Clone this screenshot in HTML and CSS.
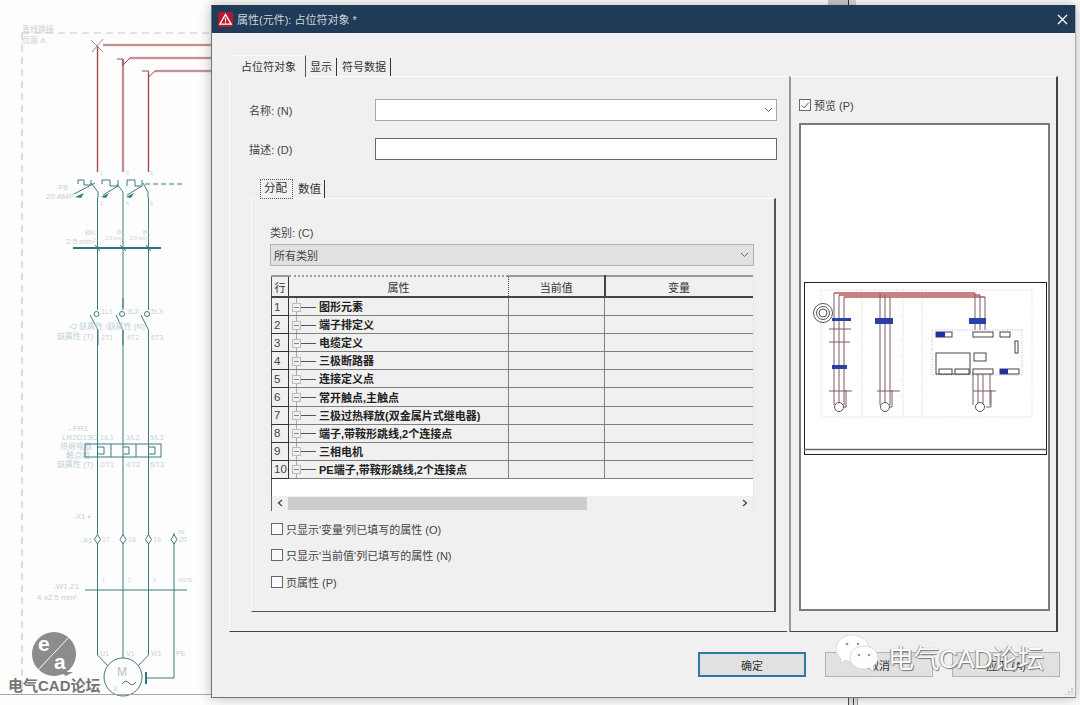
FILE: index.html
```html
<!DOCTYPE html>
<html lang="zh-CN">
<head>
<meta charset="utf-8">
<title>属性(元件): 占位符对象</title>
<link rel="stylesheet" href="styles.css">
</head>
<body>
<div class="desktop">
  <svg class="schematic" width="212" height="705" viewBox="0 0 212 705">
    <path class="dash" d="M22 33H212M22 33V695"/>
    <text class="faint" x="22" y="32">直线跳接</text>
    <text class="faint" x="22" y="43">页面 A</text>
    <path class="halo" d="M97.5 46V172M103 45H212M123 60V172M129 58H212M148.5 73V172M154 71H212"/>
    <path class="red" d="M97.5 46V172M103 45H212M117 59H123V66M123 65L130 58H212M123 60V172M142 71H148.5V78M148.5 77L155 71H212M148.5 73V172"/>
    <path class="red-light" d="M91 40L103 52M103 39L92 52"/>
    <path class="teal" d="M74 194L95 183M78 184V180H84V185H91V180M91 183L98 192V198M103 195L118 186M102 184V180H110V186H118V180M117 184L123 192V198M127 195L142 186M127 186V180H135V186H142V180M143 183L148 192V198"/>
    <path class="teal" d="M97.5 198V655M123 198V665M148.5 198V655"/>
    <path class="dash-teal" d="M145 184H184"/>
    <path class="teal-fill" d="M75 197L84 193L81 198ZM101 197L109 193L106 198ZM126 197L134 193L131 198Z"/>
    <path class="bus" d="M73 248H161"/>
    <path class="teal" d="M95 245L100 251M120 245L126 251M146 245L151 251"/>
    <text class="faint teal-text" x="56" y="190">-F6</text>
    <text class="faint teal-text" x="46" y="199">20 AMP</text>
    <text class="tiny" x="100" y="175">1</text><text class="tiny" x="126" y="175">3</text><text class="tiny" x="150" y="175">5</text>
    <text class="tiny" x="100" y="205">2</text><text class="tiny" x="126" y="205">4</text><text class="tiny" x="150" y="205">6</text>
    <text class="faint" x="85" y="235">BK</text><text class="tiny" x="117" y="234">BK</text><text class="tiny" x="143" y="234">BK</text>
    <text class="faint" x="66" y="244">2.5 mm²</text><text class="tiny" x="105" y="240">2.5 mm²</text><text class="tiny" x="130" y="240">2.5 mm²</text>
    <path class="white-fill" d="M90 310H103V330H90ZM116 310H129V330H116ZM141 310H155V330H141Z"/>
    <path class="teal" d="M97.5 298V308M123 298V308M148.5 298V308M90 315L98 330V345M116 315L123 330V345M141 315L148.5 330V345"/>
    <circle class="open" cx="96.5" cy="314" r="2.5"/><circle class="open" cx="122" cy="314" r="2.5"/><circle class="open" cx="147" cy="314" r="2.5"/>
    <text class="tiny-lg" x="101" y="314">1L1</text><text class="tiny-lg" x="127" y="314">3L2</text><text class="tiny-lg" x="151" y="314">5L3</text>
    <text class="tiny-lg" x="101" y="340">2T1</text><text class="tiny-lg" x="127" y="340">4T2</text><text class="tiny-lg" x="151" y="340">6T3</text>
    <text class="faint teal-text" x="68" y="329">-Q 缺属性 !缺属性 (N)</text>
    <text class="faint teal-text" x="57" y="339">缺属性 (T)</text>
    <text class="faint teal-text" x="68" y="431">- FR1</text>
    <text class="faint teal-text" x="62" y="440">LR2D13C</text>
    <text class="faint teal-text" x="60" y="449">热继电器</text>
    <text class="faint teal-text" x="66" y="458">触点组</text>
    <text class="faint teal-text" x="57" y="467">缺属性 (T)</text>
    <text class="tiny-lg" x="100" y="440">1/L1</text><text class="tiny-lg" x="126" y="440">3/L2</text><text class="tiny-lg" x="150" y="440">5/L3</text>
    <text class="tiny-lg" x="100" y="467">2/T1</text><text class="tiny-lg" x="126" y="467">4/T2</text><text class="tiny-lg" x="150" y="467">6/T3</text>
    <rect class="box" x="85" y="444" width="76" height="13"/>
    <path class="teal" d="M111 444V457M136 444V457M97 447H104V454H97M123 447H129V454H123M148 447H155V454H148"/>
    <text class="faint teal-text" x="73" y="519">-X1 ▪</text>
    <text class="faint teal-text" x="80" y="543">-X1</text>
    <path class="teal" d="M174 533V678H146"/>
    <path class="bar" d="M146 672V684"/>
    <path class="diamond" d="M97.5 534.500L100.500 539.500L97.500 544L94.500 539.500ZM123 534.500L126 539.500L123 544L120 539.500ZM148.500 534.500L151.500 539.500L148.500 544L145.500 539.500ZM174 534.500L177 539.500L174 544L171 539.500Z"/>
    <text class="tiny-lg" x="102" y="542">17</text><text class="tiny-lg" x="128" y="542">18</text><text class="tiny-lg" x="153" y="542">19</text><text class="tiny-lg" x="179" y="542">20</text><text class="tiny" x="178" y="534">PE</text>
    <path class="teal" d="M85 590H187"/>
    <text class="faint teal-text" x="53" y="589">-W1.Z1</text>
    <text class="faint teal-text" x="37" y="600">4 x2.5 mm²</text>
    <text class="tiny" x="102" y="582">1</text><text class="tiny" x="128" y="582">2</text><text class="tiny" x="153" y="582">3</text><text class="tiny" x="178" y="582">GNYE</text>
    <text class="tiny-lg" x="100" y="656">U1</text><text class="tiny-lg" x="126" y="656">V1</text><text class="tiny-lg" x="151" y="656">W1</text><text class="tiny-lg" x="176" y="656">PE</text>
    <path class="teal" d="M97.5 655L108 666M148.500 655L138 666"/>
    <circle class="motor" cx="123" cy="677" r="19"/>
    <text class="motor-text" x="117" y="676">M</text>
    <text class="tiny-lg" x="113" y="691">3</text>
    <path class="teal" d="M122 684Q126 679 129 683T136 682"/>
    <path class="frame" d="M0 694.500H212"/>
    <circle class="logo-disc" cx="54" cy="654" r="22"/>
    <path class="logo-tail" d="M60 672L73 672L66 676Z"/>
    <path class="logo-slash" d="M38 670L70 636"/>
    <text class="logo-letter" x="38" y="651">e</text>
    <text class="logo-letter" x="54" y="669">a</text>
    <text class="logo-text" x="8" y="691">电气CAD论坛</text>
  </svg>

  <div class="app-edge app-edge-top"></div>
  <div class="app-edge app-edge-bottom"></div>

  <section class="dialog">
    <header class="titlebar">
      <svg class="app-icon" width="15" height="15" viewBox="0 0 16 16">
        <rect class="app-icon-bg" width="16" height="16" rx="2"/>
        <path class="app-icon-tri" d="M8 2.500L14 13H2Z"/>
        <path class="app-icon-mark" d="M8 6V10M8 11V12"/>
      </svg>
      <span class="title-text">属性(元件): 占位符对象 *</span>
      <svg class="close" width="11" height="11" viewBox="0 0 11 11"><path d="M1 1L10 10M10 1L1 10"/></svg>
    </header>

    <div class="dlg-body">
      <div class="panes">
        <div class="left-pane">
          <div class="tabs">
            <span class="tab active">占位符对象</span>
            <span class="tab">显示</span>
            <span class="tab">符号数据</span>
          </div>
          <div class="panel">
            <div class="form-row first">
              <label class="form-label">名称: (N)</label>
              <div class="combo">
                <svg class="chev" width="9" height="6" viewBox="0 0 9 6"><path d="M1 1L4.500 4.500L8 1"/></svg>
              </div>
            </div>
            <div class="form-row second">
              <label class="form-label">描述: (D)</label>
              <div class="textbox"></div>
            </div>

            <div class="inner-tabs">
              <span class="inner-tab focus">分配</span>
              <span class="inner-tab">数值</span>
            </div>
            <div class="inner-panel">
              <div class="cat-label">类别: (C)</div>
              <div class="select">
                <span>所有类别</span>
                <svg class="chev" width="9" height="6" viewBox="0 0 9 6"><path d="M1 1L4.500 4.500L8 1"/></svg>
              </div>

              <div class="grid-wrap">
                <table class="grid">
                  <thead>
                    <tr><th class="c-no">行</th><th class="c-prop">属性</th><th class="c-cur">当前值</th><th class="c-var">变量</th></tr>
                  </thead>
                  <tbody>
                    <tr><td class="no">1</td><td class="prop"><i class="plus"></i><b>图形元素</b></td><td></td><td></td></tr>
                    <tr><td class="no">2</td><td class="prop"><i class="plus"></i><b>端子排定义</b></td><td></td><td></td></tr>
                    <tr><td class="no">3</td><td class="prop"><i class="plus"></i><b>电缆定义</b></td><td></td><td></td></tr>
                    <tr><td class="no">4</td><td class="prop"><i class="plus"></i><b>三极断路器</b></td><td></td><td></td></tr>
                    <tr><td class="no">5</td><td class="prop"><i class="plus"></i><b>连接定义点</b></td><td></td><td></td></tr>
                    <tr><td class="no">6</td><td class="prop"><i class="plus"></i><b>常开触点,主触点</b></td><td></td><td></td></tr>
                    <tr><td class="no">7</td><td class="prop"><i class="plus"></i><b>三极过热释放(双金属片式继电器)</b></td><td></td><td></td></tr>
                    <tr><td class="no">8</td><td class="prop"><i class="plus"></i><b>端子,带鞍形跳线,2个连接点</b></td><td></td><td></td></tr>
                    <tr><td class="no">9</td><td class="prop"><i class="plus"></i><b>三相电机</b></td><td></td><td></td></tr>
                    <tr><td class="no">10</td><td class="prop"><i class="plus"></i><b>PE端子,带鞍形跳线,2个连接点</b></td><td></td><td></td></tr>
                  </tbody>
                </table>
                <div class="grid-blank"></div>
                <div class="hscroll">
                  <svg class="arrow" width="6" height="8" viewBox="0 0 6 8"><path d="M5 1L1.500 4L5 7"/></svg>
                  <div class="thumb"></div>
                  <svg class="arrow" width="6" height="8" viewBox="0 0 6 8"><path d="M1 1L4.500 4L1 7"/></svg>
                </div>
              </div>

              <div class="check-row c1"><i class="check"></i><span>只显示'变量'列已填写的属性 (O)</span></div>
              <div class="check-row c2"><i class="check"></i><span>只显示'当前值'列已填写的属性 (N)</span></div>
              <div class="check-row c3"><i class="check"></i><span>页属性 (P)</span></div>
            </div>
          </div>
        </div>

        <div class="right-pane">
          <div class="check-row preview-check">
            <i class="check checked"><svg width="11" height="11" viewBox="0 0 11 11"><path d="M2 5.500L4.500 8L9.500 2.500"/></svg></i>
            <span>预览 (P)</span>
          </div>
          <div class="preview-box">
            <svg class="sheet" width="243" height="173" viewBox="0 0 243 173">
              <rect class="sheet-frame" x="0.500" y="0.500" width="242" height="172"/>
              <path class="sheet-foot" d="M0 167.500H243"/>
              <path class="sheet-dots" d="M17 8H228V135H17ZM58 8V135M99 8V135M118 8V135"/>
              <path class="sheet-red" d="M30 11H171M35 13H176M40 15H181"/>
              <path class="sheet-line" d="M30 11V123M35 13V123M40 15V123M76 11V123M81 13V123M86 15V123M171 11V48M176 13V48M181 15V48M169 90V123M174 90V123M179 90V123M186 90V123"/>
              <path class="sheet-line" d="M25 47H47M25 109H48M25 60H46M73 109H96M169 109H192M42 108V125H38M88 108V125H84M187 108V125H182"/>
              <circle class="sheet-ring" cx="19" cy="31" r="9.500"/><circle class="sheet-ring" cx="19" cy="31" r="6.500"/><circle class="sheet-ring" cx="19" cy="31" r="4"/>
              <circle class="sheet-ring" cx="35" cy="125" r="4.500"/><circle class="sheet-ring" cx="81" cy="125" r="4.500"/><circle class="sheet-ring" cx="176" cy="125" r="4.500"/>
              <path class="sheet-blue" d="M28 36H47V39H28ZM28 83H43V87H28ZM71 36H89V42H71ZM165 36H182V42H165Z"/>
              <path class="sheet-dots-blue" d="M128 48H218V93H128Z"/>
              <rect class="sheet-part" x="132" y="50" width="16" height="5"/>
              <rect class="sheet-fillblue" x="132" y="50" width="9" height="5"/>
              <rect class="sheet-part" x="169" y="50" width="20" height="5"/>
              <rect class="sheet-part" x="196" y="50" width="10" height="5"/>
              <rect class="sheet-part" x="211" y="59" width="3" height="12"/>
              <rect class="sheet-part" x="132" y="71" width="34" height="21"/>
              <rect class="sheet-part" x="135" y="87" width="13" height="5"/>
              <rect class="sheet-part" x="151" y="87" width="14" height="5"/>
              <rect class="sheet-part" x="170" y="71" width="12" height="8"/>
              <rect class="sheet-part" x="169" y="87" width="20" height="5"/>
              <rect class="sheet-part" x="196" y="87" width="19" height="5"/>
              <rect class="sheet-fillblue" x="196" y="87" width="8" height="5"/>
            </svg>
          </div>
        </div>
      </div>

      <div class="buttons">
        <button class="btn default">确定</button>
        <button class="btn">取消</button>
        <button class="btn">应用 (A)</button>
      </div>
    </div>
    <svg class="grip" width="10" height="10" viewBox="0 0 10 10"><path d="M8 2V4M8 5V7M8 8V9M5 5V7M5 8V9M2 8V9"/></svg>
  </section>

  <div class="watermark">
    <svg class="wechat" width="44" height="40" viewBox="0 0 44 40">
      <path class="wx-back" d="M16 0C7 0 0 6 0 14C0 18 2 21 5 24L4 28L10 25C12 26 14 27 17 27C26 27 33 21 33 14C33 6 25 0 16 0Z"/>
      <path class="wx-front" d="M28 11C20 11 14 16 14 23C14 29 20 34 28 34C30 34 31 34 33 33L38 37L37 31C40 29 42 26 42 23C42 16 36 11 28 11Z"/>
      <circle class="wx-eye" cx="11" cy="9" r="1.300"/><circle class="wx-eye" cx="22" cy="9" r="1.300"/>
      <circle class="wx-eye" cx="23" cy="20" r="1.300"/><circle class="wx-eye" cx="33" cy="20" r="1.300"/>
    </svg>
    <span class="wm-text">电气CAD论坛</span>
  </div>
</div>
</body>
</html>
```
FILE: styles.css
```css
* { box-sizing: border-box; }
html, body { margin: 0; padding: 0; background: #fdfdfd; }
body { font-family: "Liberation Sans", "Noto Sans CJK SC", sans-serif; font-size: 11px; color: #3a3a3a; }
.desktop { position: relative; width: 1080px; height: 705px; overflow: hidden; background: #fdfdfd; }

/* background schematic */
.schematic { position: absolute; left: 0; top: 0; }
.schematic text { font-family: "Liberation Sans", "Noto Sans CJK SC", sans-serif; }
.schematic path, .schematic circle, .schematic rect { fill: none; }
.dash { stroke: #c8c8c8; stroke-width: 1.2; stroke-dasharray: 7 5; }
.faint { font-size: 8px; fill: #cfcfcf; }
.teal-text { fill: #c2d2d6; }
.tiny { font-size: 5px; fill: #c6d4d6; }
.tiny-lg { font-size: 7px; fill: #c4d3d6; }
.halo { stroke: #f6d9d9; stroke-width: 3; }
.red { stroke: #8e4b4f; stroke-width: 1; }
.red-light { stroke: #b88a8c; stroke-width: 1; }
.teal { stroke: #3d7b80; stroke-width: 1; }
.dash-teal { stroke: #3d7b80; stroke-width: 1; stroke-dasharray: 5 3; }
.schematic .teal-fill { fill: #2f7d80; }
.bus { stroke: #2f7577; stroke-width: 2; }
.schematic .white-fill { fill: #fdfdfd; }
.schematic .open { stroke: #3d7b80; fill: #fdfdfd; }
.schematic .box { stroke: #3d7b80; }
.schematic .diamond { stroke: #3d7b80; fill: #fdfdfd; }
.bar { stroke: #2f7577; stroke-width: 2; }
.schematic .motor { stroke: #3d7b80; fill: #fdfdfd; }
.motor-text { font-size: 12px; fill: #b0c4c7; }
.frame { stroke: #a8a8a8; }
.schematic .logo-disc { fill: #8c8c8c; }
.schematic .logo-tail { fill: #8c8c8c; }
.logo-slash { stroke: #fff; stroke-width: 1; }
.logo-letter { font-size: 21px; font-weight: 700; fill: #fff; }
.logo-text { font-size: 15px; font-weight: 700; fill: #757575; }

.app-edge { position: absolute; }
.app-edge-top { left: 828px; top: 0; width: 30px; height: 6px; background: linear-gradient(90deg, #c9c9c9 0 20px, #333 20px 21px, #d9d9d9 21px 28px, #fdfdfd 28px); }
.app-edge-bottom { left: 848px; top: 698px; width: 20px; height: 7px; background: linear-gradient(90deg, #444 0 1px, #e5e5e5 1px 5px, #444 5px 6px, #e5e5e5 6px 9px, #999 9px 10px, #fdfdfd 10px); }

/* dialog window */
.dialog { position: absolute; left: 211px; top: 5px; width: 865px; height: 693px; background: #f0f0f0; box-shadow: 0 0 12px rgba(0, 0, 0, .28); border-left: 1px solid #6d7780; border-bottom: 1px solid #777; border-right: 1px solid #aaa; display: flex; flex-direction: column; }
.titlebar { height: 28px; flex: none; background: #1f3b57; display: flex; align-items: center; padding: 0 7px 0 6px; color: #cfd6dd; font-size: 11px; }
.app-icon { flex: none; margin-right: 4px; }
.app-icon-bg { fill: #b3182e; }
.app-icon-tri { fill: none; stroke: #fff; stroke-width: 1.400; }
.app-icon-mark { stroke: #fff; stroke-width: 1.200; fill: none; }
.title-text { flex: 1; }
.close path { stroke: #fff; stroke-width: 1.300; fill: none; }

.dlg-body { flex: 1; display: flex; flex-direction: column; padding: 22px 15px 0 17px; }
.panes { display: flex; height: 577px; flex: none; }
.left-pane { width: 558px; display: flex; flex-direction: column; }

.tabs { height: 21px; flex: none; display: flex; align-items: flex-end; }
.tab { height: 18px; line-height: 18px; padding: 0 4px; border-right: 1px solid #333; color: #333; }
.tab + .tab + .tab { padding-left: 5px; }
.tab.active { height: 22px; margin-bottom: -1px; padding: 0 9px 0 12px; background: #f0f0f0; border-top: 1px solid #fafafa; position: relative; z-index: 1; line-height: 23px; border-right: 1px solid #555; }
.panel { flex: 1; border-top: 1px solid #fbfbfb; border-left: 1px solid #fbfbfb; border-bottom: 1px solid #444; padding-left: 19px; }

.form-row { display: flex; align-items: center; }
.form-row.first { height: 22px; margin-top: 22px; }
.form-row.second { height: 22px; margin-top: 17px; }
.form-label { width: 126px; flex: none; color: #444; }
.combo { width: 402px; height: 22px; background: #fff; border: 1px solid #a8a8a8; display: flex; align-items: center; justify-content: flex-end; padding-right: 3px; }
.textbox { width: 402px; height: 22px; background: #fff; border: 1px solid #666; }
.chev path { stroke: #666; stroke-width: 1; fill: none; }

.inner-tabs { display: flex; align-items: flex-end; height: 20px; margin-top: 18px; padding-left: 11px; }
.inner-tab { height: 18px; line-height: 19px; padding: 0 3px 0 3px; border-right: 1px solid #333; color: #333; font-size: 11.500px; }
.inner-tab.focus { width: 33px; height: 20px; line-height: 19px; padding: 0 0 0 4px; margin-right: 2px; margin-bottom: -1px; outline: 1px dotted #555; outline-offset: -1px; background: #f0f0f0; position: relative; z-index: 1; border-right: none; }
.inner-panel { width: 525px; margin-left: 2px; height: 414px; border-top: 1px solid #fbfbfb; border-left: 1px solid #fbfbfb; border-right: 2px solid #555; border-bottom: 1px solid #555; padding-left: 18px; }

.cat-label { margin-top: 27px; height: 14px; line-height: 14px; color: #444; }
.select { width: 484px; height: 22px; margin-top: 4px; background: #e1e1e1; border: 1px solid #b4b4b4; display: flex; align-items: center; justify-content: space-between; padding: 0 4px 0 3px; color: #444; }

.grid-wrap { width: 483px; margin-top: 9px; margin-left: 1px; border-right: 1px solid #e8e8e8; }
.grid { border-collapse: collapse; table-layout: fixed; width: 481px; background: #f0f0f0; }
.grid th { height: 21px; font-weight: 400; color: #333; padding: 0; text-align: center; border-top: 2px solid #999; border-bottom: 2px solid #444; }
.c-no { width: 17px; border-left: 1px solid #555; border-right: 1px solid #333; }
.c-prop { width: 220px; border-left: 1px dotted #444; border-right: 1px dotted #444; border-top-style: dotted !important; }
.c-cur { width: 96px; border-right: 2px solid #444; }
.c-var { width: 148px; }
.grid td { height: 18px; padding: 0; border-bottom: 1px solid #808080; border-right: 1px solid #808080; line-height: 16px; white-space: nowrap; }
.grid td:last-child { border-right: none; }
.grid td.no { border-left: 1px solid #555; border-right: 1px solid #333; border-bottom: 1px solid #333; padding-left: 2px; color: #444; font-size: 11.500px; }
.grid td.prop { background: linear-gradient(#aaa, #aaa) 7px 0 / 1px 100% no-repeat; padding-left: 3px; }
.plus { display: inline-block; position: relative; vertical-align: middle; width: 9px; height: 9px; border: 1px solid #bbb; background: #f0f0f0 linear-gradient(#888, #888) center / 5px 1px no-repeat; }
.plus::after { content: ""; position: absolute; left: 8px; top: 3px; width: 15px; height: 1px; background: #555; }
.prop b { font-weight: 700; color: #222; font-size: 11px; margin-left: 18px; vertical-align: middle; }

.grid-blank { height: 17px; background: #fff; border-left: 1px solid #555; }
.hscroll { height: 15px; display: flex; align-items: center; background: #f0f0f0; border-left: 1px solid #666; }
.arrow { flex: none; margin: 0 5px; }
.arrow path { stroke: #444; stroke-width: 1.300; fill: none; }
.thumb { flex: none; width: 299px; height: 13px; background: #cdcdcd; margin-right: auto; }

.check-row { display: flex; align-items: center; color: #444; height: 14px; }
.check-row.c1 { margin-top: 11px; }
.check-row.c2 { margin-top: 12px; }
.check-row.c3 { margin-top: 13px; }
.check { width: 12px; height: 12px; flex: none; margin-left: 1px; margin-right: 3px; background: #fafafa; border: 1px solid #666; display: flex; }
.check path { stroke: #444; stroke-width: 1; fill: none; }

.right-pane { width: 269px; margin-left: 2px; margin-top: 21px; border-top: 1px solid #fbfbfb; border-left: 2px solid #999; border-right: 2px solid #444; border-bottom: 1px solid #444; padding-left: 8px; padding-right: 5px; }
.preview-check { margin-top: 21px; }
.preview-check .check { margin-left: 0; }
.preview-box { width: 251px; height: 488px; margin-top: 11px; background: #fff; border: 2px solid #7b7b7b; display: flex; align-items: center; justify-content: center; }
.sheet { flex: none; margin: 2px 0 0 2px; }
.sheet-frame { fill: #fff; stroke: #222; }
.sheet-foot { stroke: #666; stroke-width: 1.500; fill: none; }
.sheet-dots { fill: none; stroke: #cfcfcf; stroke-dasharray: 1 1.500; }
.sheet-dots-blue { fill: none; stroke: #b9b2d8; stroke-dasharray: 1 1.500; }
.sheet-red { fill: none; stroke: #c98080; stroke-width: 2; }
.sheet-line { fill: none; stroke: #7d5a66; stroke-width: 1; }
.sheet-ring { fill: #fff; stroke: #555; }
.sheet-blue { fill: #2b3fa8; }
.sheet-part { fill: #fff; stroke: #444; }
.sheet-fillblue { fill: #1c2fa8; }

.buttons { display: flex; justify-content: flex-end; gap: 19px; margin-top: 20px; }
.btn { width: 108px; height: 25px; padding: 0; background: #e1e1e1; border: 1px solid #b4b4b4; font: 11px "Liberation Sans", "Noto Sans CJK SC", sans-serif; color: #333; }
.btn.default { border: 2px solid #2c79a6; }
.grip { position: absolute; right: 1px; bottom: 1px; }
.grip path { stroke: #aaa; fill: none; }

/* watermark lying over the dialog */
.watermark { position: absolute; left: 836px; top: 637px; display: flex; align-items: center; gap: 8px; }
.wechat { flex: none; margin-top: -2px; }
.wx-back, .wx-front { fill: #fff; stroke: #c4c4c4; stroke-width: .6; }
.wx-eye { fill: #999; }
.wm-text { font-family: "Liberation Sans", "Noto Sans CJK SC", sans-serif; font-size: 26px; color: #fafafa; text-shadow: 1px 1px 1px #777, -1px 0 1px #999; white-space: nowrap; letter-spacing: -.5px; }
```
